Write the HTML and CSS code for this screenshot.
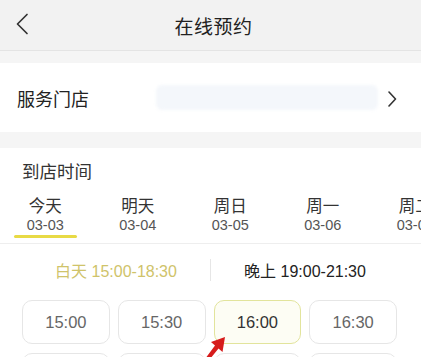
FILE: index.html
```html
<!DOCTYPE html>
<html lang="zh">
<head>
<meta charset="utf-8">
<link rel="stylesheet" href="styles.css">
</head>
<body>
<div class="page">
  <header class="topbar">
    <svg class="back" width="14" height="22" viewBox="0 0 14 22"><path d="M12 1.5 L2.5 11 L12 20.5" fill="none" stroke="#333" stroke-width="1.7" stroke-linecap="round" stroke-linejoin="round"/></svg>
    <h1 class="title">在线预约</h1>
  </header>

  <section class="store">
    <span class="label">服务门店</span>
    <span class="store-value"></span>
    <svg class="chev" width="9" height="16" viewBox="0 0 9 16"><path d="M1 1 L7.5 8 L1 15" fill="none" stroke="#333" stroke-width="1.6" stroke-linecap="round" stroke-linejoin="round"/></svg>
  </section>

  <section class="time">
    <div class="time-title">到店时间</div>
    <div class="days">
      <div class="day active"><span class="dname">今天</span><span class="ddate">03-03</span></div>
      <div class="day"><span class="dname">明天</span><span class="ddate">03-04</span></div>
      <div class="day"><span class="dname">周日</span><span class="ddate">03-05</span></div>
      <div class="day"><span class="dname">周一</span><span class="ddate">03-06</span></div>
      <div class="day"><span class="dname">周二</span><span class="ddate">03-07</span></div>
    </div>
    <div class="periods">
      <div class="period on">白天 15:00-18:30</div>
      <div class="period-sep"></div>
      <div class="period">晚上 19:00-21:30</div>
    </div>
    <div class="slots">
      <div class="slot">15:00</div>
      <div class="slot">15:30</div>
      <div class="slot sel">16:00</div>
      <div class="slot">16:30</div>
      <div class="slot">17:00</div>
      <div class="slot">17:30</div>
      <div class="slot">18:00</div>
      <div class="slot">18:30</div>
    </div>
    <svg class="cursor" width="22" height="22" viewBox="0 0 22 22"><path d="M20 0 L17.5 15 L13.5 11.5 L5 22 L0 22 L10 8.5 L6 5 Z" fill="#d61c1c"/></svg>
  </section>
</div>
</body>
</html>
```

FILE: styles.css
```css
html, body {
  margin: 0;
  padding: 0;
}
body {
  background: #f5f5f5;
  font-family: "Liberation Sans", "Noto Sans CJK SC", sans-serif;
  color: #333;
  width: 421px;
  height: 357px;
  overflow: hidden;
}
.page {
  display: flex;
  flex-direction: column;
}
.topbar {
  height: 51px;
  background: #f2f2f2;
  border-bottom: 1px solid #e4e4e4;
  display: flex;
  align-items: center;
  justify-content: center;
  position: relative;
  box-sizing: border-box;
}
.back {
  position: absolute;
  left: 15px;
  top: 13px;
}
.title {
  margin: 0;
  font-size: 19px;
  font-weight: normal;
  color: #222;
  font-family: "Noto Sans CJK SC", sans-serif;
  letter-spacing: 0.5px;
  padding-left: 6px;
}
.store {
  margin-top: 12px;
  height: 69px;
  background: #fff;
  display: flex;
  align-items: center;
  padding: 0 24px 0 17px;
}
.label {
  font-size: 18px;
  font-family: "Noto Sans CJK SC", sans-serif;
  color: #222;
  padding-top: 1px;
}
.store-value {
  flex: 1;
  height: 25px;
  margin-left: 67px;
  background: #f4f7fb;
  border-radius: 6px;
  filter: blur(1.5px);
}
.chev {
  margin-left: 10px;
  margin-top: 2px;
}
.time {
  margin-top: 16px;
  background: #fff;
  padding-top: 12px;
  position: relative;
  flex: 1;
  height: 260px;
}
.time-title {
  font-size: 17.5px;
  font-family: "Noto Sans CJK SC", sans-serif;
  color: #333;
  padding-left: 22px;
  line-height: 22px;
}
.days {
  display: flex;
  margin-left: -1px;
  margin-top: 13px;
  border-bottom: 1px solid #eeeeee;
  height: 49px;
  box-sizing: border-box;
}
.day {
  flex: 0 0 92.5px;
  display: flex;
  flex-direction: column;
  align-items: center;
  position: relative;
}
.dname {
  font-size: 16.5px;
  line-height: 20px;
  font-family: "Noto Sans CJK SC", sans-serif;
  color: #333;
}
.ddate {
  font-size: 14.5px;
  line-height: 16px;
  color: #555;
  margin-top: 2px;
}
.day.active::after {
  content: "";
  position: absolute;
  left: 15px;
  right: 15px;
  top: 40px;
  height: 3px;
  border-radius: 2px;
  background: #e8da45;
}
.periods {
  display: flex;
  align-items: center;
  padding: 0 22px;
  height: 40px;
  margin-top: 6px;
}
.period {
  flex: 1;
  text-align: center;
  font-size: 16px;
  color: #222;
}
.period.on {
  color: #cfc36a;
}
.period-sep {
  width: 1px;
  height: 22px;
  background: #e6e6e6;
}
.slots {
  display: grid;
  grid-template-columns: repeat(4, 1fr);
  gap: 9px 8px;
  padding: 0 24px 0 22px;
  margin-top: 10px;
}
.slot {
  height: 44px;
  box-sizing: border-box;
  border: 1px solid #e6e6e6;
  border-radius: 10px;
  display: flex;
  align-items: center;
  justify-content: center;
  font-size: 16.5px;
  color: #666;
}
.slot.sel {
  border-color: #e2e49c;
  background: #fdfdf4;
  color: #333;
}
.cursor {
  position: absolute;
  left: 205px;
  top: 189px;
}
```
